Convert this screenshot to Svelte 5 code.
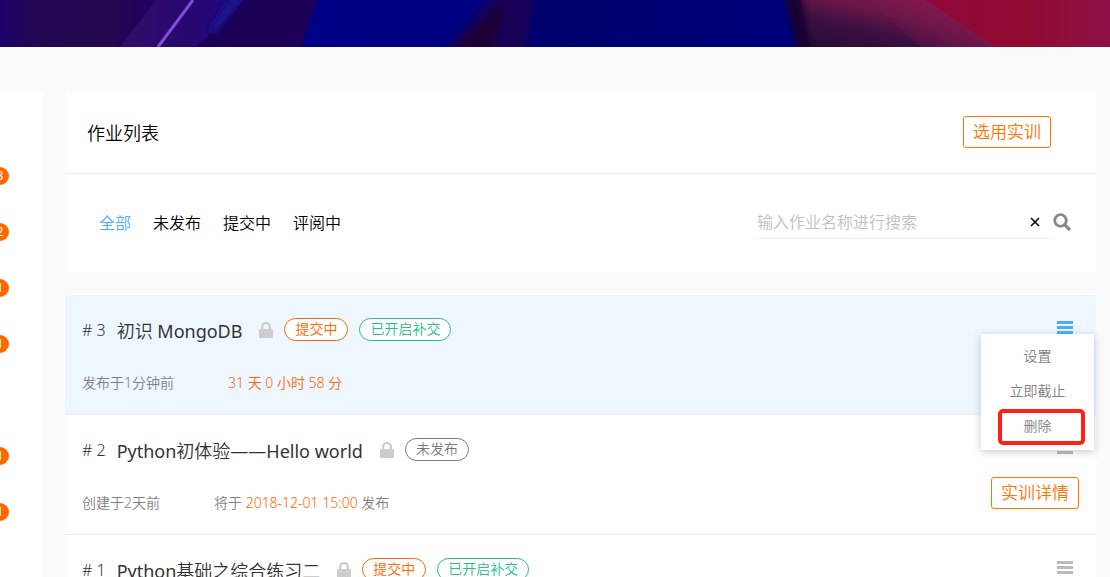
<script lang="ts">
  type Tag = {
    text: string;
    color: string;
  }

  type Homework = {
    num: number;
    name: string;
    tags: Tag[];
    created: string;
    before: string;
    highlight: string;
    after: string;
    detail: boolean;
  }

  const SUBMITTING = {text: '提交中', color: 'orange'}
  const LATE_OPEN = {text: '已开启补交', color: 'green'}
  const UNPUBLISHED = {text: '未发布', color: 'grey'}

  const counts = ['3', '2', '1', '1', '', '1', '1']
  const tabs = ['全部', '未发布', '提交中', '评阅中']
  const actions = ['设置', '立即截止', '删除']
  const homeworks: Homework[] = [
    {num: 3, name: '初识 MongoDB', tags: [SUBMITTING, LATE_OPEN], created: '发布于1分钟前', before: '', highlight: '31 天 0 小时 58 分', after: '', detail: false},
    {num: 2, name: 'Python初体验——Hello world', tags: [UNPUBLISHED], created: '创建于2天前', before: '将于 ', highlight: '2018-12-01 15:00', after: ' 发布', detail: true},
    {num: 1, name: 'Python基础之综合练习二', tags: [SUBMITTING, LATE_OPEN], created: '', before: '', highlight: '', after: '', detail: false},
  ]

  let activeTab = '全部'
  let openMenu = 3
  let marked = '删除'
  let keyword = ''

  const toggleMenu = (num: number) => {
    openMenu = openMenu === num ? 0 : num
  }
</script>

<div class="page">
  <svg class="banner" viewBox="0 0 1110 47" preserveAspectRatio="none" aria-hidden="true">
    <defs>
      <linearGradient id="left">
        <stop offset="0" stop-color="#1c0069" />
        <stop offset="0.1" stop-color="#210653" />
        <stop offset="0.3" stop-color="#25074f" />
        <stop offset="0.44" stop-color="#1f005e" />
        <stop offset="1" stop-color="#1b0066" />
      </linearGradient>
      <linearGradient id="band">
        <stop offset="0" stop-color="#320d69" />
        <stop offset="0.5" stop-color="#28086f" />
        <stop offset="1" stop-color="#220482" />
      </linearGradient>
      <linearGradient id="blue">
        <stop offset="0" stop-color="#000087" />
        <stop offset="0.4" stop-color="#000080" />
        <stop offset="0.5" stop-color="#00006c" />
        <stop offset="1" stop-color="#00007c" />
      </linearGradient>
      <linearGradient id="plum" x1="0" y1="1" x2="1" y2="0">
        <stop offset="0" stop-color="#210b35" />
        <stop offset="0.35" stop-color="#3c0f41" />
        <stop offset="0.6" stop-color="#6a1648" />
        <stop offset="1" stop-color="#98194f" />
      </linearGradient>
      <linearGradient id="sheen">
        <stop offset="0" stop-color="#86184f" stop-opacity="0" />
        <stop offset="1" stop-color="#86184f" />
      </linearGradient>
      <linearGradient id="red">
        <stop offset="0" stop-color="#90083b" />
        <stop offset="0.5" stop-color="#900a31" />
        <stop offset="1" stop-color="#8d1044" />
      </linearGradient>
      <filter id="soft" filterUnits="userSpaceOnUse" x="0" y="-30" width="1110" height="120">
        <feGaussianBlur stdDeviation="3" />
      </filter>
    </defs>
    <rect width="340" height="47" fill="url(#left)" />
    <path d="M156 0H250L196 47H120Z" fill="url(#band)" />
    <path d="M244 0H317L301 47H198Z" fill="#1b0057" />
    <path d="M232 -6H246L216 34L208 32Z" fill="#18138a" filter="url(#soft)" />
    <path d="M193 0L158 47" stroke="#834bdc" stroke-width="3" />
    <path d="M317 0H800V47H301Z" fill="url(#blue)" />
    <path d="M498 -10H536L524 60H436Z" fill="#160058" filter="url(#soft)" />
    <path d="M506 0L492 60H442Z" fill="#1b0035" filter="url(#soft)" />
    <path d="M788 0H940L1000 47H801Z" fill="url(#plum)" />
    <path d="M870 0H928L996 47H920Z" fill="url(#sheen)" opacity="0.6" />
    <path d="M784 -10H800L812 57H798Z" fill="#140030" filter="url(#soft)" />
    <path d="M926 0H1110V47H995Z" fill="url(#red)" />
  </svg>

  <div class="columns">
    <nav class="side">
      <ul>
        {#each counts as count}
          <li>
            {#if count}<span class="count">{count}</span>{/if}
          </li>
        {/each}
      </ul>
    </nav>

    <main>
      <section class="panel">
        <header>
          <h1>作业列表</h1>
          <button class="outline">选用实训</button>
        </header>
        <div class="filters">
          <div class="tabs">
            {#each tabs as tab}
              <button class:active={tab === activeTab} on:click={() => activeTab = tab}>{tab}</button>
            {/each}
          </div>
          <div class="search">
            <div class="field">
              <input type="text" placeholder="输入作业名称进行搜索" aria-label="输入作业名称进行搜索" bind:value={keyword} />
              <button class="clear" aria-label="清空" on:click={() => keyword = ''}>
                <svg width="10" height="10" viewBox="0 0 10 10"><path d="M1 1L9 9M9 1L1 9" stroke="#000" stroke-width="1.5" /></svg>
              </button>
            </div>
            <button class="find" aria-label="搜索">
              <svg width="18" height="18" viewBox="0 0 18 18" fill="none" stroke="#888">
                <circle cx="7.5" cy="7.5" r="5.8" stroke-width="2.8" />
                <path d="M11.8 11.8L16 16" stroke-width="3.2" stroke-linecap="round" />
              </svg>
            </button>
          </div>
        </div>
      </section>

      <ul class="list">
        {#each homeworks as item}
          <li class:current={openMenu === item.num}>
            <div class="info">
              <h2>
                <span class="num"># {item.num}</span>
                <a href="#{item.num}">{item.name}</a>
                <svg class="lock" width="14" height="16" viewBox="0 0 14 16">
                  <path d="M3.2 8V4.8a3.8 3.8 0 0 1 7.6 0V8" fill="none" stroke="#ccc" stroke-width="2.2" />
                  <rect y="7" width="14" height="9" rx="1" fill="#ccc" />
                </svg>
                {#each item.tags as tag}
                  <span class="tag {tag.color}">{tag.text}</span>
                {/each}
              </h2>
              <p>
                <span>{item.created}</span>
                <span>{item.before}<em>{item.highlight}</em>{item.after}</span>
              </p>
            </div>
            <div class="side-actions">
              <button class="more" aria-label="更多" on:click={() => toggleMenu(item.num)}>
                <svg width="16" height="13" viewBox="0 0 16 13" fill="currentColor">
                  <rect width="16" height="3" />
                  <rect y="5" width="16" height="3" />
                  <rect y="10" width="16" height="3" />
                </svg>
              </button>
              {#if item.detail}
                <button class="outline">实训详情</button>
              {/if}
            </div>
            {#if openMenu === item.num}
              <div class="menu">
                {#each actions as action}
                  <button class:marked={action === marked}>{action}</button>
                {/each}
              </div>
            {/if}
          </li>
        {/each}
      </ul>
    </main>
  </div>
</div>

<style>
  :global(body) {
    margin: 0;
    background: #fafafa;
  }

  .page {
    height: 100vh;
    overflow: hidden;
    font-family: "Noto Sans", "Noto Sans CJK SC", sans-serif;
    font-weight: 350;
    font-size: 14px;
    color: #000;
  }

  .banner {
    display: block;
    width: 100%;
    height: 47px;
  }

  .columns {
    display: flex;
    align-items: flex-start;
    gap: 22px;
    padding: 45px 14px 0 0;
  }

  ul {
    list-style: none;
    margin: 0;
    padding: 0;
  }

  button {
    font: inherit;
    color: inherit;
    padding: 0;
    border: none;
    background: none;
    cursor: pointer;
  }

  svg {
    display: block;
  }

  .side {
    flex: none;
    width: 43px;
    min-height: 100vh;
    background: #fff;
  }

  .side ul {
    padding-top: 56px;
  }

  .side li {
    display: flex;
    align-items: center;
    height: 56px;
  }

  .count {
    width: 18px;
    margin-left: -9px;
    line-height: 18px;
    border-radius: 9px;
    background: #ff6800;
    color: #fff;
    font-size: 12px;
    font-weight: 400;
    text-align: center;
  }

  main {
    flex: 1;
    min-width: 0;
  }

  .panel {
    margin-bottom: 23px;
    background: #fff;
  }

  header {
    display: flex;
    align-items: center;
    justify-content: space-between;
    height: 79px;
    padding: 0 45px 2px 22px;
    border-bottom: 1px solid #ebebeb;
  }

  h1 {
    margin: 0;
    font-size: 18px;
    font-weight: inherit;
  }

  .outline {
    height: 32px;
    padding: 0 9px;
    border: 1px solid #ff7500;
    border-radius: 3px;
    background: #fff;
    color: #ff7500;
    font-size: 17px;
    line-height: 30px;
    white-space: nowrap;
  }

  .filters {
    display: flex;
    align-items: center;
    justify-content: space-between;
    height: 96px;
    padding: 0 25px 2px 34px;
  }

  .tabs {
    display: flex;
    gap: 22px;
    font-size: 16px;
  }

  .active {
    color: #4cacff;
  }

  .search {
    display: flex;
    align-items: center;
    gap: 2px;
  }

  .field {
    display: flex;
    align-items: center;
    width: 294px;
    height: 32px;
    border-bottom: 1px solid #ebebeb;
  }

  .field input {
    flex: 1;
    min-width: 0;
    padding: 0;
    border: none;
    outline: none;
    background: none;
    font: inherit;
    font-size: 16px;
  }

  .field input::placeholder {
    color: #c0c0c0;
    opacity: 1;
  }

  .clear {
    padding: 0 11px;
  }

  .list li {
    position: relative;
    display: flex;
    justify-content: space-between;
    height: 119px;
    padding: 0 17px;
    border-bottom: 1px solid #ebebeb;
    background: #fff;
  }

  .list .current {
    background: #eef7ff;
  }

  .info {
    padding-top: 17px;
  }

  h2 {
    display: flex;
    align-items: center;
    gap: 11px;
    height: 35px;
    margin: 0;
    font-size: 18px;
    font-weight: inherit;
    white-space: nowrap;
  }

  h2 a {
    margin-right: 6px;
    color: #333;
    font-family: "Noto Sans", "Noto Sans CJK SC DemiLight", "Noto Sans CJK SC", sans-serif;
    font-weight: 400;
    text-decoration: none;
  }

  .num {
    font-size: 16px;
    color: #333;
  }

  .tag {
    padding: 0 10px 1px;
    border: 1px solid;
    border-radius: 12px;
    background: #fff;
    font-size: 14px;
    line-height: 20px;
  }

  .orange {
    color: #ff6800;
  }

  .green {
    color: #29bd8b;
  }

  .grey {
    color: #747a7f;
  }

  p {
    display: flex;
    gap: 54px;
    margin: 26px 0 0;
    line-height: 20px;
    color: #808080;
    white-space: nowrap;
  }

  em {
    font-style: normal;
    color: #ff6800;
  }

  .side-actions {
    display: flex;
    flex-direction: column;
    align-items: flex-end;
    gap: 23px;
    padding-top: 26px;
  }

  .more {
    margin-right: 6px;
    color: #bbb;
  }

  .current .more {
    color: #4cacff;
  }

  .menu {
    position: absolute;
    z-index: 1;
    top: 39px;
    right: 2px;
    width: 113px;
    padding: 4px 0 7px;
    background: #fff;
    box-shadow: 0 2px 8px rgba(60, 90, 130, 0.3);
    color: #808080;
  }

  .menu button {
    position: relative;
    display: block;
    width: 100%;
    line-height: 35px;
  }

  .marked::after {
    content: "";
    position: absolute;
    inset: 1px 9px -2px 17px;
    border: 4px solid #ff1f14;
    border-radius: 5px;
  }
</style>
